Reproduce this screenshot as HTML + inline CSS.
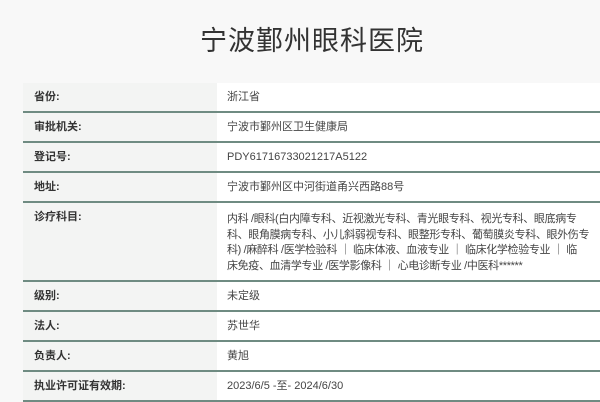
<!DOCTYPE html>
<html><head><meta charset="utf-8"><style>
body{margin:0;width:600px;height:400px;overflow:hidden;background:#f8f8f8;font-family:"Liberation Sans","Noto Sans CJK SC",sans-serif;}
h1{margin:0;position:absolute;top:20px;left:12px;width:600px;text-align:center;font-weight:normal;font-size:27px;color:#333;line-height:42px;letter-spacing:1px;}
table{position:absolute;top:83px;left:23px;width:590px;border-collapse:collapse;table-layout:fixed;}
td{font-size:11px;line-height:15px;color:#333;border-bottom:2px solid #6f8b82;vertical-align:top;padding:7px 8px 6px;}
td.l{width:175px;background:#f3f4f3;font-weight:bold;color:#333;padding-left:11px;}
td.v{background:#fff;color:#444;padding-left:10px;padding-right:4px;}
td.m{letter-spacing:-0.35px;padding-right:4px;padding-top:9px;line-height:15.5px;white-space:nowrap}
</style></head><body>
<h1>宁波鄞州眼科医院</h1>
<table>
<tr><td class="l">省份:</td><td class="v">浙江省</td></tr>
<tr><td class="l">审批机关:</td><td class="v">宁波市鄞州区卫生健康局</td></tr>
<tr><td class="l">登记号:</td><td class="v">PDY61716733021217A5122</td></tr>
<tr><td class="l">地址:</td><td class="v">宁波市鄞州区中河街道甬兴西路88号</td></tr>
<tr><td class="l">诊疗科目:</td><td class="v m">内科 /眼科(白内障专科、近视激光专科、青光眼专科、视光专科、眼底病专<br>科、眼角膜病专科、小儿斜弱视专科、眼整形专科、葡萄膜炎专科、眼外伤专<br>科) /麻醉科 /医学检验科 ｜ 临床体液、血液专业 ｜ 临床化学检验专业 ｜ 临<br>床免疫、血清学专业 /医学影像科 ｜ 心电诊断专业 /中医科******</td></tr>
<tr><td class="l">级别:</td><td class="v">未定级</td></tr>
<tr><td class="l">法人:</td><td class="v">苏世华</td></tr>
<tr><td class="l">负责人:</td><td class="v">黄旭</td></tr>
<tr><td class="l">执业许可证有效期:</td><td class="v">2023/6/5 -至- 2024/6/30</td></tr>
</table>
</body></html>
